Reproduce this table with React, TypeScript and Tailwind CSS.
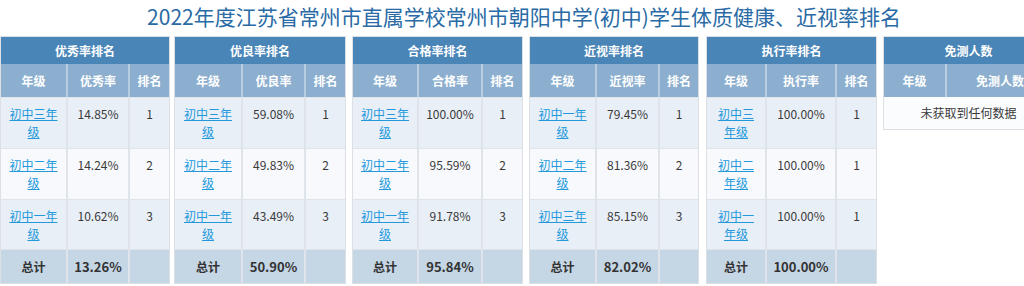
import React from "react";

type Row = { grade: string; value: string; rank: string };
type Panel = {
  title: string;
  col: string;
  width: string;
  ml: string;
  cols: string;
  rows: Row[];
  total: string;
};

const panels: Panel[] = [
  {
    title: "优秀率排名",
    col: "优秀率",
    width: "w-[170px]",
    ml: "ml-0",
    cols: "grid-cols-[67px_62px_1fr]",
    rows: [
      { grade: "初中三年级", value: "14.85%", rank: "1" },
      { grade: "初中二年级", value: "14.24%", rank: "2" },
      { grade: "初中一年级", value: "10.62%", rank: "3" },
    ],
    total: "13.26%",
  },
  {
    title: "优良率排名",
    col: "优良率",
    width: "w-[172px]",
    ml: "ml-[4px]",
    cols: "grid-cols-[68px_63px_1fr]",
    rows: [
      { grade: "初中三年级", value: "59.08%", rank: "1" },
      { grade: "初中二年级", value: "49.83%", rank: "2" },
      { grade: "初中一年级", value: "43.49%", rank: "3" },
    ],
    total: "50.90%",
  },
  {
    title: "合格率排名",
    col: "合格率",
    width: "w-[171px]",
    ml: "ml-[6px]",
    cols: "grid-cols-[66px_64px_1fr]",
    rows: [
      { grade: "初中三年级", value: "100.00%", rank: "1" },
      { grade: "初中二年级", value: "95.59%", rank: "2" },
      { grade: "初中一年级", value: "91.78%", rank: "3" },
    ],
    total: "95.84%",
  },
  {
    title: "近视率排名",
    col: "近视率",
    width: "w-[170px]",
    ml: "ml-[6px]",
    cols: "grid-cols-[67px_63px_1fr]",
    rows: [
      { grade: "初中一年级", value: "79.45%", rank: "1" },
      { grade: "初中二年级", value: "81.36%", rank: "2" },
      { grade: "初中三年级", value: "85.15%", rank: "3" },
    ],
    total: "82.02%",
  },
  {
    title: "执行率排名",
    col: "执行率",
    width: "w-[171px]",
    ml: "ml-[7px]",
    cols: "grid-cols-[60px_70px_1fr]",
    rows: [
      { grade: "初中三年级", value: "100.00%", rank: "1" },
      { grade: "初中二年级", value: "100.00%", rank: "1" },
      { grade: "初中一年级", value: "100.00%", rank: "1" },
    ],
    total: "100.00%",
  },
];

const rowBg = ["bg-[#e9eff7]", "bg-[#f8f9fd]", "bg-[#e9eff7]"];
const rowH = ["h-[51px]", "h-[51px]", "h-[50px]"];

function RankPanel({ p }: { p: Panel }) {
  return (
    <div className={`${p.width} ${p.ml} shrink-0 border border-[#dcdfe3] bg-white`}>
      <div className="h-[27px] bg-[#4a85b7] text-white font-bold text-[12px] flex items-center justify-center">
        {p.title}
      </div>
      <div className={`grid ${p.cols}`}>
        {["年级", p.col, "排名"].map((h, i) => (
          <div
            key={h}
            className={`h-[33px] bg-[#8cafcf] text-white font-bold text-[12px] flex items-center justify-center ${
              i < 2 ? "border-r-2 border-[#b9cde0]" : ""
            }`}
          >
            {h}
          </div>
        ))}
        {p.rows.map((r, ri) => (
          <React.Fragment key={ri}>
            <div
              className={`${rowH[ri]} ${rowBg[ri]} border-t border-r-2 border-[#dfe4ea] px-[8px] pt-[7px] text-center leading-[18px] text-[12px]`}
            >
              <a href="#" className="text-[#2399dc] underline">
                {r.grade}
              </a>
            </div>
            <div
              className={`${rowH[ri]} ${rowBg[ri]} border-t border-r-2 border-[#dfe4ea] pt-[7px] text-center leading-[18px] text-[12px] text-[#3a3a3a]`}
            >
              {r.value}
            </div>
            <div
              className={`${rowH[ri]} ${rowBg[ri]} border-t border-[#dfe4ea] pt-[7px] text-center leading-[18px] text-[12px] text-[#3a3a3a]`}
            >
              {r.rank}
            </div>
          </React.Fragment>
        ))}
        <div className="h-[34px] bg-[#c5d6e5] border-t border-r-2 border-[#dfe4ea] flex items-center justify-center text-[12px] font-bold text-[#333]">
          总计
        </div>
        <div className="h-[34px] bg-[#c5d6e5] border-t border-r-2 border-[#dfe4ea] flex items-center justify-center text-[13px] font-bold text-[#333]">
          {p.total}
        </div>
        <div className="h-[34px] bg-[#c5d6e5] border-t border-[#dfe4ea]" />
      </div>
    </div>
  );
}

function ExemptPanel() {
  return (
    <div className="w-[171px] ml-[6px] shrink-0 border border-[#dcdfe3] bg-white">
      <div className="h-[27px] bg-[#4a85b7] text-white font-bold text-[12px] flex items-center justify-center">
        免测人数
      </div>
      <div className="grid grid-cols-[63px_1fr]">
        <div className="h-[33px] bg-[#8cafcf] text-white font-bold text-[12px] flex items-center justify-center border-r-2 border-[#b9cde0]">
          年级
        </div>
        <div className="h-[33px] bg-[#8cafcf] text-white font-bold text-[12px] flex items-center justify-center">
          免测人数
        </div>
        <div className="col-span-2 h-[32px] bg-[#fbfcfe] flex items-center justify-center text-[12px] text-[#3a3a3a]">
          未获取到任何数据
        </div>
      </div>
    </div>
  );
}

export default function App() {
  return (
    <div
      className="w-full h-[286px] overflow-hidden bg-white"
      style={{ fontFamily: '"Noto Sans CJK SC", "Noto Sans", sans-serif' }}
    >
      <div className="w-[1060px]">
        <div className="w-[1048px] h-[33px] flex items-center justify-center text-[21px] text-[#2a6ba6] leading-none">
          2022年度江苏省常州市直属学校常州市朝阳中学(初中)学生体质健康、近视率排名
        </div>
        <div className="pt-[3px] flex items-start">
          {panels.map((p) => (
            <RankPanel key={p.title} p={p} />
          ))}
          <ExemptPanel />
        </div>
      </div>
    </div>
  );
}
